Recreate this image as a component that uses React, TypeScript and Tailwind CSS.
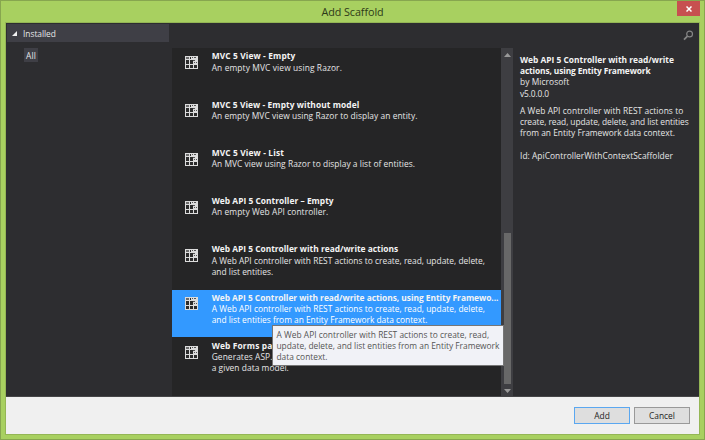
import React from "react";

type Item = { title: string; lines: string[]; titleCls: string; lineCls: string[] };

const items: Item[] = [
  { title: "MVC 5 View - Empty", lines: ["An empty MVC view using Razor."], titleCls: "tracking-[0.12px]", lineCls: ["tracking-[0.12px]"] },
  { title: "MVC 5 View - Empty without model", lines: ["An empty MVC view using Razor to display an entity."], titleCls: "tracking-[0.07px]", lineCls: ["tracking-[0.06px]"] },
  { title: "MVC 5 View - List", lines: ["An MVC view using Razor to display a list of entities."], titleCls: "tracking-[0.13px]", lineCls: ["tracking-[0.05px]"] },
  { title: "Web API 5 Controller – Empty", lines: ["An empty Web API controller."], titleCls: "tracking-[0.03px]", lineCls: ["tracking-[0.08px]"] },
  { title: "Web API 5 Controller with read/write actions", lines: ["A Web API controller with REST actions to create, read, update, delete,", "and list entities."], titleCls: "", lineCls: ["tracking-[0.015px]", ""] },
  { title: "Web API 5 Controller with read/write actions, using Entity Framewo...", lines: ["A Web API controller with REST actions to create, read, update, delete,", "and list entities from an Entity Framework data context."], titleCls: "tracking-[-0.03px]", lineCls: ["tracking-[0.015px]", "tracking-[-0.01px]"] },
  { title: "Web Forms pages using Entity Framework", lines: ["Generates ASP.NET Web Forms pages for", "a given data model."], titleCls: "tracking-[0.14px]", lineCls: ["tracking-[0.08px]", "tracking-[0.05px]"] },
];

function GridIcon() {
  return (
    <svg className="mt-[7.5px] ml-[13px] h-[13px] w-[13px] shrink-0" viewBox="0 0 13 13">
      <rect width="13" height="13" fill="#dcdcdc" />
      <g fill="#2c2c2c">
        <rect x="1" y="1" width="3" height="2" fill="#6b6b6b" />
        <rect x="5" y="1" width="1" height="2" />
        <rect x="1" y="4" width="3" height="4" />
        <rect x="5" y="4" width="3" height="4" />
        <rect x="1" y="9" width="3" height="3" />
        <rect x="5" y="9" width="3" height="3" />
        <rect x="9" y="9" width="3" height="3" />
        <path d="M7 1h1v1H7zM9 1h2v1H9zM8 4h2v1H8zM9 6h1v1H9zM11 6h1v1h-1z" fill="#555" />
      </g>
    </svg>
  );
}

export default function App() {
  return (
    <div className="relative flex h-[440px] w-[705px] flex-col overflow-hidden border border-[#87a64f] bg-[#a8d060] font-['Open_Sans','Noto_Sans',sans-serif] text-[8.4px] leading-[11.2px] whitespace-nowrap text-[#e6e6e6]">
      <header className="relative h-[21px] shrink-0 pt-[3px] text-center text-[10.8px] leading-4 text-[#2d3a18]">
        <span className="tracking-[-0.07px]">Add Scaffold</span>
        <button className="absolute top-0 right-[4px] flex h-[15px] w-[23px] items-center justify-center bg-[#c75050]">
          <svg className="h-[6px] w-[6px]" viewBox="0 0 6 6" stroke="#fff" strokeWidth="1.5"><path d="M.5.5l5 5M5.5.5l-5 5" /></svg>
        </button>
      </header>
      <div className="mx-[4px] mb-[4px] flex min-h-0 flex-1 flex-col border border-[#94b655]">
        <main className="flex h-[374px] shrink-0 border-b border-[#454547] bg-[#2d2d30]">
          <aside className="w-[166px] shrink-0">
            <div className="mt-[1px] ml-[1px] flex h-[18px] w-[162px] items-center bg-[#3f3f46]">
              <svg className="ml-[5px] h-[5px] w-[5px]" viewBox="0 0 5 5"><path d="M5 0v5H0z" fill="#f1f1f1" /></svg>
              <span className="ml-[6px] pt-px tracking-[-0.03px]">Installed</span>
            </div>
            <div className="mt-[6px] ml-[18px] h-[14px] w-[14px] bg-[#3f3f46] pl-[2px] leading-[16px] tracking-[0.2px]">All</div>
          </aside>
          <section className="flex w-[341px] shrink-0 flex-col pt-[24.5px]">
            <div className="flex min-h-0 flex-1">
              <ul className="w-[329px] overflow-hidden bg-[#252526] pt-[1px]">
                {items.map((it, i) => (
                  <li key={it.title} className="h-[48.25px]">
                    <div className={i === 5 ? "flex h-[47.5px] bg-[#3399ff] text-white" : "flex h-[47.5px]"}>
                      <GridIcon />
                      <div className="ml-[13.7px] pt-[1.9px]">
                        <div className={"font-bold text-[#f4f4f4] " + it.titleCls}>{it.title}</div>
                        {it.lines.map((l, j) => <div key={l} className={it.lineCls[j]}>{l}</div>)}
                      </div>
                    </div>
                  </li>
                ))}
              </ul>
              <div className="flex w-[12px] flex-col items-center bg-[#3e3e42]">
                <svg className="mt-[5px] h-[4px] w-[7px]" viewBox="0 0 7 4"><path d="M0 4L3.5 0 7 4z" fill="#999" /></svg>
                <div className="mt-[176px] h-[151px] w-[7px] bg-[#686868]" />
                <svg className="mt-[5px] h-[4px] w-[7px]" viewBox="0 0 7 4"><path d="M0 0L3.5 4 7 0z" fill="#999" /></svg>
              </div>
            </div>
          </section>
          <section className="flex-1 pl-[7px]">
            <svg className="mt-[6.5px] ml-[163px] h-[11px] w-[11px]" viewBox="0 0 11 11" fill="none" stroke="#858585" strokeWidth="1.2"><circle cx="6.6" cy="4" r="2.9" /><path d="M4.5 6.1L1 9.6" strokeWidth="1.7" /></svg>
            <div className="mt-[13.5px]">
              <div className="font-bold text-[#f4f4f4]">Web API 5 Controller with read/write</div>
              <div className="font-bold tracking-[-0.13px] text-[#f4f4f4]">actions, using Entity Framework</div>
              <div className="tracking-[0.07px]">by Microsoft</div>
              <div className="tracking-[-0.12px]">v5.0.0.0</div>
            </div>
            <div className="mt-[6px]">
              <div className="tracking-[0.07px]">A Web API controller with REST actions to</div>
              <div className="tracking-[-0.05px]">create, read, update, delete, and list entities</div>
              <div>from an Entity Framework data context.</div>
            </div>
            <div className="mt-[12px] tracking-[0.04px]">Id: ApiControllerWithContextScaffolder</div>
          </section>
        </main>
        <footer className="flex min-h-0 flex-1 justify-end gap-[4px] bg-[#f0f0f0] pt-[10px] pr-[9px] text-[#222]">
          <button className="h-[17px] w-[56px] border border-[#5aa7f0] bg-[#dedede] leading-[15px]">Add</button>
          <button className="h-[17px] w-[56px] border border-[#999] bg-[#dedede] leading-[15px]">Cancel</button>
        </footer>
      </div>
      <div className="absolute top-[324px] left-[270.5px] h-[41px] w-[232.5px] border border-[#767676] bg-[#f1f2f7] pt-[3px] pl-[4px] text-[#555]">
        <div className="tracking-[0.02px]">A Web API controller with REST actions to create, read,</div>
        <div className="tracking-[-0.015px]">update, delete, and list entities from an Entity Framework</div>
        <div>data context.</div>
      </div>
    </div>
  );
}
